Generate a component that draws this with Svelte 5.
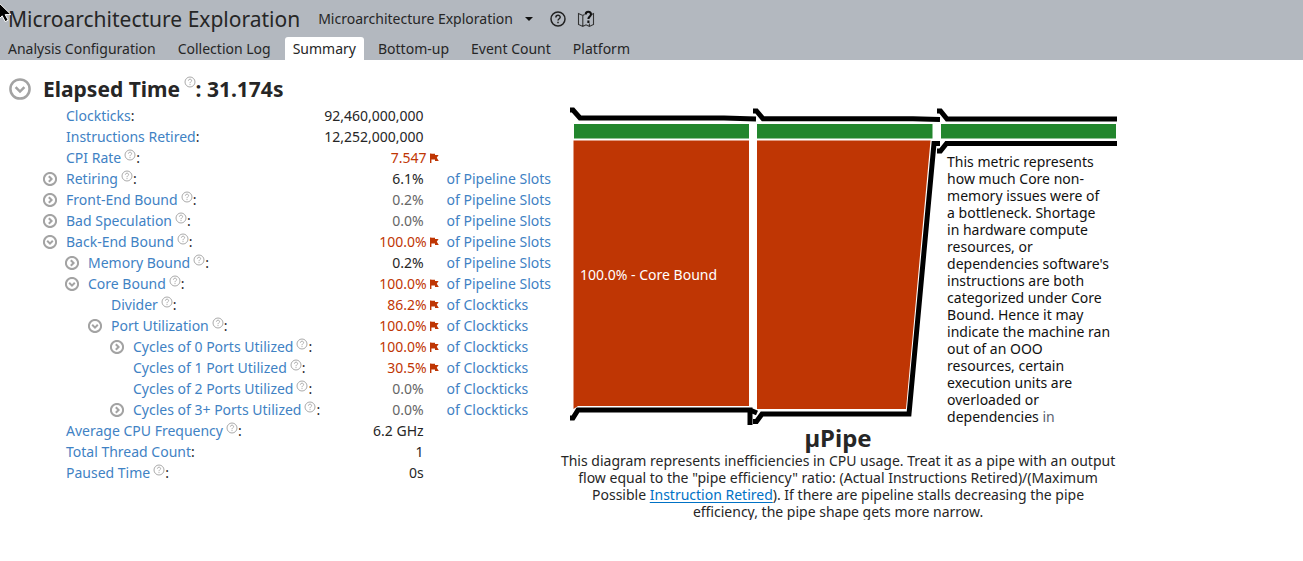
<script>
  const tabs = ['Analysis Configuration', 'Collection Log', 'Summary', 'Bottom-up', 'Event Count', 'Platform'];
  let active = $state('Summary');

  const SLOTS = 'of Pipeline Slots';
  const CLOCKS = 'of Clockticks';
  const metrics = [
    { name: 'Clockticks', value: '92,460,000,000', depth: 0 },
    { name: 'Instructions Retired', value: '12,252,000,000', depth: 0 },
    { name: 'CPI Rate', value: '7.547', depth: 0, help: true, tone: 'flagged' },
    { name: 'Retiring', value: '6.1%', depth: 0, help: true, unit: SLOTS, toggle: 'closed' },
    { name: 'Front-End Bound', value: '0.2%', depth: 0, help: true, unit: SLOTS, toggle: 'closed', tone: 'dim' },
    { name: 'Bad Speculation', value: '0.0%', depth: 0, help: true, unit: SLOTS, toggle: 'closed', tone: 'dim' },
    { name: 'Back-End Bound', value: '100.0%', depth: 0, help: true, unit: SLOTS, toggle: 'open', tone: 'flagged' },
    { name: 'Memory Bound', value: '0.2%', depth: 1, help: true, unit: SLOTS, toggle: 'closed' },
    { name: 'Core Bound', value: '100.0%', depth: 1, help: true, unit: SLOTS, toggle: 'open', tone: 'flagged' },
    { name: 'Divider', value: '86.2%', depth: 2, help: true, unit: CLOCKS, tone: 'flagged' },
    { name: 'Port Utilization', value: '100.0%', depth: 2, help: true, unit: CLOCKS, toggle: 'open', tone: 'flagged' },
    { name: 'Cycles of 0 Ports Utilized', value: '100.0%', depth: 3, help: true, unit: CLOCKS, toggle: 'closed', tone: 'flagged' },
    { name: 'Cycles of 1 Port Utilized', value: '30.5%', depth: 3, help: true, unit: CLOCKS, tone: 'flagged' },
    { name: 'Cycles of 2 Ports Utilized', value: '0.0%', depth: 3, help: true, unit: CLOCKS, tone: 'dim' },
    { name: 'Cycles of 3+ Ports Utilized', value: '0.0%', depth: 3, help: true, unit: CLOCKS, toggle: 'closed', tone: 'dim' },
    { name: 'Average CPU Frequency', value: '6.2 GHz', depth: 0, help: true },
    { name: 'Total Thread Count', value: '1', depth: 0 },
    { name: 'Paused Time', value: '0s', depth: 0, help: true }
  ];
</script>

{#snippet helpMark()}
  <svg class="help" viewBox="0 0 12 12" aria-hidden="true">
    <circle cx="6" cy="6" r="5" />
    <path d="M4.4 4.7C4.4 2.6 7.6 2.7 7.6 4.6C7.6 5.8 6 5.8 6 7.2M6 8.1V9.1" />
  </svg>
{/snippet}

{#snippet chevron(open)}
  <svg viewBox="0 0 14 14" aria-hidden="true">
    <circle cx="7" cy="7" r="6.1" />
    {#if open}
      <path d="M4.2 5.8L7 8.6L9.8 5.8" />
    {:else}
      <path d="M5.8 4.2L8.6 7L5.8 9.8" />
    {/if}
  </svg>
{/snippet}

<div class="app">
  <header>
    <div class="titlebar">
      <h1>Microarchitecture Exploration</h1>
      <div class="viewpoint">
        <select aria-label="Viewpoint">
          <option>Microarchitecture Exploration</option>
        </select>
        <svg class="caret" viewBox="0 0 8 4" aria-hidden="true"><path d="M0 0H8L4 4Z" /></svg>
      </div>
      <button class="tool" aria-label="Help">
        <svg viewBox="0 0 18 18">
          <circle cx="9" cy="9" r="7" fill="none" stroke="#222" stroke-width="1.5" />
          <path d="M6.9 7.4C6.9 4.6 11.2 4.7 11.2 7.2C11.2 8.8 9 8.7 9 10.6M9 11.8V13.3" fill="none" stroke="#222" stroke-width="1.5" />
        </svg>
      </button>
      <button class="tool" aria-label="Guide">
        <svg viewBox="0 0 18 18">
          <path d="M7.5 4.6L5.8 5.5L1.5 3.6V14.5L5.8 16.4L9 14.8L12.4 16.4L16.5 14.5V3.6L14.6 4.5M5.8 5.5V16.4M12.4 13.5V16.4" fill="none" stroke="#333" stroke-width="1.1" />
          <path d="M8.7 4.4C8.7 0.8 14 0.9 14 4.2C14 6.5 11.4 6.4 11.4 9M11.4 10.6V13" fill="none" stroke="#111" stroke-width="2.1" />
        </svg>
      </button>
    </div>
    <div class="tabs" role="tablist">
      {#each tabs as tab}
        <button role="tab" aria-selected={active === tab} class:active={active === tab} onclick={() => (active = tab)}>{tab}</button>
      {/each}
    </div>
    <svg class="pointer" viewBox="0 0 12 22" aria-hidden="true">
      <path d="M-6 -2L11 14.6H5.2L8.2 20.2L5.2 21.6L2.2 15.8L-2 20Z" fill="#000" stroke="#fff" stroke-width="1" />
    </svg>
  </header>

  <main>
    <section class="summary">
      <div class="heading">
        <button class="toggle large" aria-label="Collapse Elapsed Time">{@render chevron(true)}</button>
        <h2>Elapsed Time {@render helpMark()}: 31.174s</h2>
      </div>
      <table>
        <tbody>
          {#each metrics as m}
            <tr>
              <th scope="row">
                <div class="name depth{m.depth}">
                  <span class="slot">
                    {#if m.toggle}
                      <button class="toggle" aria-label={m.name} aria-expanded={m.toggle === 'open'}>{@render chevron(m.toggle === 'open')}</button>
                    {/if}
                  </span>
                  <span><span class="term">{m.name}</span>{#if m.help}{@render helpMark()}{/if}:</span>
                </div>
              </th>
              <td class="value {m.tone ?? ''}">
                {m.value}{#if m.tone === 'flagged'}<svg class="flag" viewBox="0 0 10 10" aria-hidden="true"><path d="M1 0.5H2.4V10H1ZM2.4 0.7H6V2H9.6L7.8 4.7L9.8 8H6V6.6H2.4Z" /></svg>{/if}
              </td>
              <td class="unit">{m.unit ?? ''}</td>
            </tr>
          {/each}
        </tbody>
      </table>
    </section>

    <figure>
      <div class="diagram">
        <svg class="pipe" viewBox="0 0 560 322" role="img" aria-label="µPipe">
          <g class="good">
            <path d="M16 20H191V34.4H16ZM199 20H374.5V34.4H199ZM383 20H558V34.4H383Z" />
          </g>
          <g class="bad">
            <path d="M15.5 36.5H191V302H20L15.5 305ZM199 36.5H372.5L348 305H199Z" />
          </g>
          <g class="wall">
            <path d="M12 6H15L22 14H166L198 15" />
            <path d="M195 7H198.5L205 14.7H355L382 15.4" />
            <path d="M379 7H382.5L389 15H559" />
            <path d="M559 39.5H388.5L382.5 47H379" />
            <path d="M382 39.5H376L351 310H204L198.5 317.5H195" />
            <path d="M12 314H15L20 306H192V321M192 306L199 309" />
          </g>
          <text x="22" y="176">100.0% - Core Bound</text>
        </svg>
        <p class="hint">This metric represents how much Core non-memory issues were of a&nbsp;bottleneck. Shortage in&nbsp;hardware compute resources, or dependencies software's instructions are both categorized under Core Bound. Hence it may indicate the machine ran out of an OOO resources, certain execution units are overloaded or dependencies <span>in</span></p>
      </div>
      <figcaption>
        <h2>µPipe</h2>
        <p>This diagram represents inefficiencies in CPU usage. Treat it as a pipe with an output flow equal to the "pipe efficiency" ratio: (Actual Instructions Retired)/(Maximum Possible <a href="#instruction-retired">Instruction Retired</a>). If there are pipeline stalls decreasing the pipe efficiency, the pipe shape gets more narrow.</p>
      </figcaption>
    </figure>
  </main>
</div>

<style>
  :global(body) {
    background: #fff;
  }
  .app {
    font: 14px/17px 'Noto Sans', sans-serif;
    color: #262626;
  }
  h1, h2, p, figure {
    margin: 0;
  }
  button, select {
    font: inherit;
    color: inherit;
    background: none;
    border: 0;
    padding: 0;
    margin: 0;
  }

  header {
    position: relative;
    background: #b3b8bf;
  }
  .titlebar {
    display: flex;
    align-items: center;
    height: 37px;
    padding-left: 8px;
  }
  h1 {
    font-size: 21px;
    font-weight: 400;
    line-height: 30px;
    white-space: nowrap;
  }
  .viewpoint {
    display: flex;
    align-items: center;
    margin: 0 16px 0 18px;
  }
  select {
    appearance: none;
    padding-right: 20px;
    margin-right: -8px;
  }
  .caret {
    width: 8px;
    height: 4px;
    fill: #111;
    pointer-events: none;
  }
  .tool {
    display: flex;
    margin-right: 10px;
  }
  .tool svg {
    width: 18px;
    height: 18px;
  }
  .tabs {
    display: flex;
    gap: 6px;
  }
  .tabs button {
    height: 23px;
    padding: 0 8px;
    border-radius: 3px 3px 0 0;
    white-space: nowrap;
  }
  .tabs .active {
    background: #fff;
  }
  .pointer {
    position: absolute;
    left: 0;
    top: 0;
    width: 12px;
    height: 22px;
  }

  main {
    display: flex;
    align-items: flex-start;
    gap: 7px;
    padding-top: 13px;
  }
  .heading {
    display: flex;
    align-items: center;
    gap: 12px;
    padding-left: 9px;
    height: 32px;
  }
  h2 {
    font-size: 21px;
    line-height: 30px;
    font-weight: 700;
  }
  .help {
    width: 12px;
    height: 12px;
    margin-left: 3px;
    vertical-align: 2px;
    fill: none;
    stroke: #aaa;
    stroke-width: 1;
  }
  h2 .help {
    margin-left: -2px;
    vertical-align: 9px;
  }
  .toggle {
    display: block;
    width: 14px;
    height: 14px;
    fill: none;
    stroke: #a3a3a3;
    stroke-width: 2;
  }
  .toggle svg {
    display: block;
    width: 100%;
    height: 100%;
  }
  .toggle.large {
    width: 22px;
    height: 22px;
    stroke-width: 1.6;
  }

  table {
    border-collapse: collapse;
    margin-left: 43px;
  }
  th, td {
    height: 21px;
    padding: 0;
    font-weight: 400;
    text-align: left;
    white-space: nowrap;
  }
  .name {
    display: flex;
    align-items: center;
    gap: 9px;
  }
  .slot {
    width: 14px;
  }
  .depth1 { padding-left: 22px; }
  .depth2 { padding-left: 45px; }
  .depth3 { padding-left: 67px; }
  .term, .unit {
    color: #3f82c4;
  }
  .value {
    text-align: right;
    padding: 0 15px 0 4px;
  }
  .dim {
    color: #666;
  }
  .flagged {
    color: #bf3604;
    padding-right: 0;
  }
  .flag {
    width: 10px;
    height: 10px;
    margin-left: 2px;
    fill: #bf3604;
  }
  .unit {
    padding-left: 8px;
  }

  figure {
    flex: 0 1 560px;
    min-width: 0;
    margin-top: 31px;
  }
  .diagram {
    position: relative;
  }
  .pipe {
    display: block;
    width: 100%;
  }
  .good { fill: #22862d; }
  .bad { fill: #bf3604; }
  .wall {
    fill: none;
    stroke: #000;
    stroke-width: 5;
  }
  .pipe text {
    fill: #fff;
    font-size: 14px;
  }
  .hint {
    position: absolute;
    left: 389px;
    right: 6px;
    top: 49px;
    color: #111;
  }
  .hint span {
    color: #5a6270;
  }
  figcaption {
    text-align: center;
  }
  figcaption h2 {
    font-size: 24px;
    line-height: 24px;
    margin-bottom: 2px;
  }
  a {
    color: #0071c5;
    text-underline-offset: 2px;
  }
</style>
